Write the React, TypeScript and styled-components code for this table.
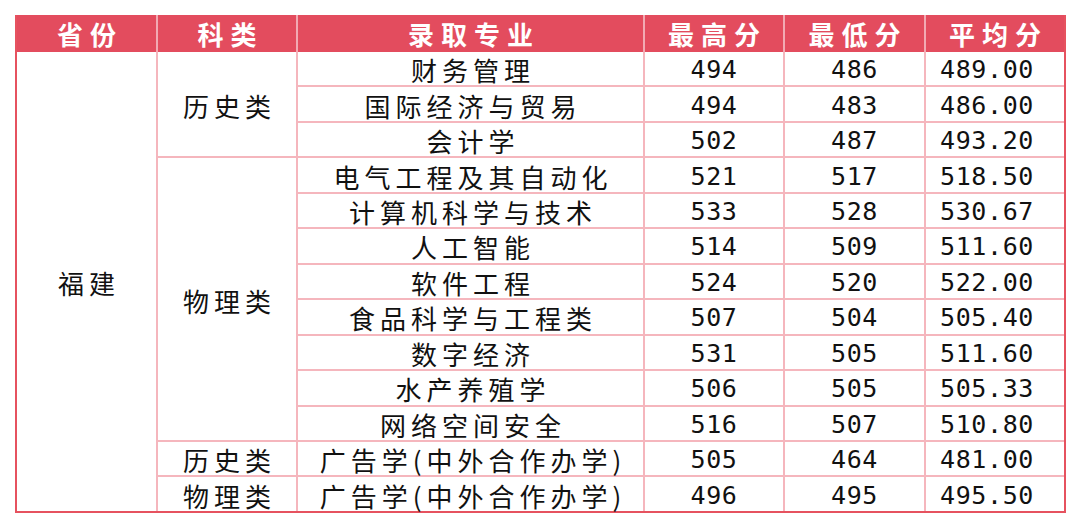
import React from "react";
import styled, { createGlobalStyle } from "styled-components";

const GlobalStyle = createGlobalStyle`
  html, body {
    margin: 0;
    padding: 0;
    background: #ffffff;
  }
`;

type Row = {
  major: string;
  max: string;
  min: string;
  avg: string;
};

type Group = {
  subject: string;
  rows: Row[];
};

const groups: Group[] = [
  {
    subject: "历史类",
    rows: [
      { major: "财务管理", max: "494", min: "486", avg: "489.00" },
      { major: "国际经济与贸易", max: "494", min: "483", avg: "486.00" },
      { major: "会计学", max: "502", min: "487", avg: "493.20" },
    ],
  },
  {
    subject: "物理类",
    rows: [
      { major: "电气工程及其自动化", max: "521", min: "517", avg: "518.50" },
      { major: "计算机科学与技术", max: "533", min: "528", avg: "530.67" },
      { major: "人工智能", max: "514", min: "509", avg: "511.60" },
      { major: "软件工程", max: "524", min: "520", avg: "522.00" },
      { major: "食品科学与工程类", max: "507", min: "504", avg: "505.40" },
      { major: "数字经济", max: "531", min: "505", avg: "511.60" },
      { major: "水产养殖学", max: "506", min: "505", avg: "505.33" },
      { major: "网络空间安全", max: "516", min: "507", avg: "510.80" },
    ],
  },
  {
    subject: "历史类",
    rows: [
      { major: "广告学(中外合作办学)", max: "505", min: "464", avg: "481.00" },
    ],
  },
  {
    subject: "物理类",
    rows: [
      { major: "广告学(中外合作办学)", max: "496", min: "495", avg: "495.50" },
    ],
  },
];

const totalRows = groups.reduce((n, g) => n + g.rows.length, 0);

const Page = styled.div`
  padding: 15px 0 0 15px;
`;

const Table = styled.table`
  border-collapse: separate;
  border-spacing: 0;
  table-layout: fixed;
  width: 1051px;
  border-left: 2px solid #e6525f;
  border-right: 2px solid #e6525f;
  border-bottom: 2px solid #e6525f;
  font-family: "Noto Sans CJK SC", "Noto Sans", sans-serif;
  color: #111111;
`;

const HeadCell = styled.th`
  height: 37px;
  padding: 0 0 0 7px;
  background: #e34c5e;
  color: #ffffff;
  font-size: 26px;
  font-weight: 700;
  letter-spacing: 7px;
  line-height: 37px;
  text-align: center;
  border-right: 2px solid #f2aab3;
  &:last-child {
    border-right: none;
  }
`;

const Cell = styled.td<{ $last?: boolean }>`
  height: 35.46px;
  padding: 2px 0 0 5px;
  box-sizing: border-box;
  font-size: 26px;
  line-height: 31px;
  letter-spacing: 5px;
  text-align: center;
  white-space: nowrap;
  border-right: ${({ $last }) => ($last ? "none" : "2px solid #f5b6bd")};
  border-bottom: 2px solid #f5b6bd;
  vertical-align: middle;
`;

const NumCell = styled(Cell)<{ $shift?: number }>`
  font-family: "DejaVu Sans Mono", "Liberation Mono", monospace;
  font-size: 25px;
  letter-spacing: 0.6px;
  padding: 2px ${({ $shift }) => $shift ?? 0}px 0 0;
`;

const LastRow = styled.tr`
  td {
    border-bottom: none;
    height: 33.46px;
  }
`;

export default function App() {
  let index = 0;
  return (
    <Page>
      <GlobalStyle />
      <Table>
        <colgroup>
          <col style={{ width: 141 }} />
          <col style={{ width: 140 }} />
          <col style={{ width: 347 }} />
          <col style={{ width: 140 }} />
          <col style={{ width: 141 }} />
          <col style={{ width: 138 }} />
        </colgroup>
        <thead>
          <tr>
            <HeadCell>省份</HeadCell>
            <HeadCell>科类</HeadCell>
            <HeadCell>录取专业</HeadCell>
            <HeadCell>最高分</HeadCell>
            <HeadCell>最低分</HeadCell>
            <HeadCell>平均分</HeadCell>
          </tr>
        </thead>
        <tbody>
          {groups.map((g, gi) =>
            g.rows.map((r, ri) => {
              const first = index === 0;
              index += 1;
              const isLast = index === totalRows;
              const RowTag = isLast ? LastRow : "tr";
              return (
                <RowTag key={`${gi}-${ri}`}>
                  {first && (
                    <Cell rowSpan={totalRows} style={{ borderBottom: "none" }}>
                      福建
                    </Cell>
                  )}
                  {ri === 0 && <Cell rowSpan={g.rows.length}>{g.subject}</Cell>}
                  <Cell>{r.major}</Cell>
                  <NumCell>{r.max}</NumCell>
                  <NumCell>{r.min}</NumCell>
                  <NumCell $last $shift={16}>
                    {r.avg}
                  </NumCell>
                </RowTag>
              );
            })
          )}
        </tbody>
      </Table>
    </Page>
  );
}
